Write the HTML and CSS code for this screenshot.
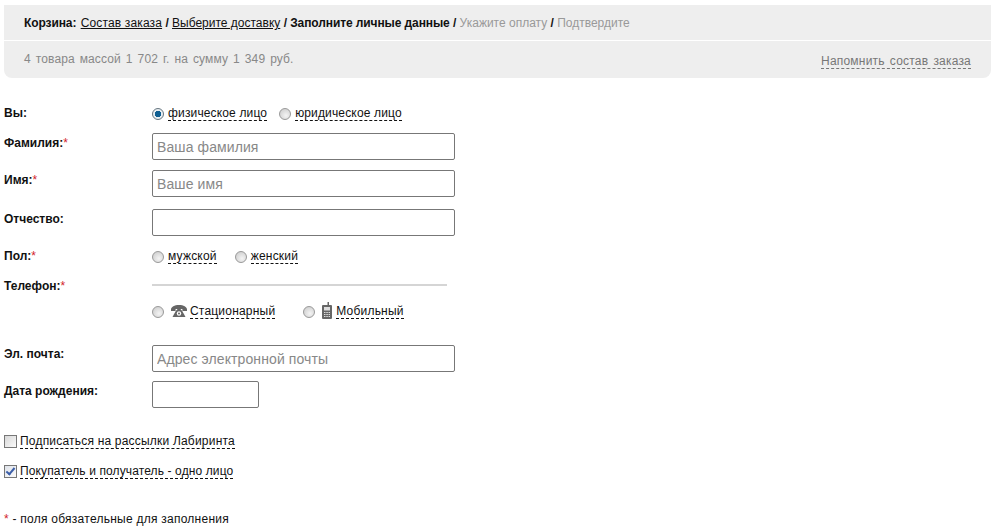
FILE: index.html
```html
<!DOCTYPE html>
<html lang="ru">
<head>
    <meta charset="UTF-8">
    <meta name="viewport" content="width=device-width, initial-scale=1.0">
    <title>Корзина</title>
    <link rel="stylesheet" href="styles.css">
</head>
<body>
    <div class="cart-panel">
        <div class="steps">
            <b class="steps-title">Корзина:</b>
            <a class="step-first" href="#">Состав заказа</a> <b>/</b>
            <a href="#">Выберите доставку</a> <b>/</b>
            <b>Заполните личные данные</b> <b>/</b>
            <span class="step-off">Укажите оплату</span> <b>/</b>
            <span class="step-off">Подтвердите</span>
        </div>
        <div class="summary">
            <span>4 товара массой 1 702 г. на сумму 1 349 руб.</span>
            <span class="remind">Напомнить состав заказа</span>
        </div>
    </div>

    <form class="order-form">
        <div class="row row-you">
            <div class="label">Вы:</div>
            <div class="choices">
                <label class="choice"><input type="radio" name="who" checked><span class="dash">физическое лицо</span></label>
                <label class="choice"><input type="radio" name="who"><span class="dash">юридическое лицо</span></label>
            </div>
        </div>
        <div class="row row-surname">
            <div class="label">Фамилия:<i>*</i></div>
            <input class="field" type="text" placeholder="Ваша фамилия">
        </div>
        <div class="row row-name">
            <div class="label">Имя:<i>*</i></div>
            <input class="field" type="text" placeholder="Ваше имя">
        </div>
        <div class="row row-middle">
            <div class="label">Отчество:</div>
            <input class="field" type="text">
        </div>
        <div class="row row-sex">
            <div class="label">Пол:<i>*</i></div>
            <div class="choices choices-wide">
                <label class="choice"><input type="radio" name="sex"><span class="dash">мужской</span></label>
                <label class="choice"><input type="radio" name="sex"><span class="dash">женский</span></label>
            </div>
        </div>
        <div class="row row-phone">
            <div class="label">Телефон:<i>*</i></div>
            <div class="phone-line"></div>
        </div>
        <div class="row row-phone-type">
            <div class="label"></div>
            <div class="choices choices-phone">
                <label class="choice">
                    <input type="radio" name="phone">
                    <svg class="ico-phone" viewBox="0 0 16 12" width="16" height="12">
                        <path d="M0 4.500C0 2 3.500 0 8 0s8 2 8 4.500V6h-4.600V4H9.800v1H6.200V4H4.600v2H0z" fill="#666"/>
                        <path d="M4.500 6.500L5.600 5h4.800l1.100 1.500L14.500 12h-13z" fill="#666"/>
                        <circle cx="8" cy="8.500" r="2.200" fill="#fff"/>
                        <circle cx="8" cy="8.500" r="1" fill="#666"/>
                    </svg>
                    <span class="dash">Стационарный</span>
                </label>
                <label class="choice">
                    <input type="radio" name="phone">
                    <svg class="ico-mobile" viewBox="0 0 10 17" width="10" height="17">
                        <path d="M5.500 0h1.500v3h2a1 1 0 0 1 1 1v12a1 1 0 0 1-1 1H1a1 1 0 0 1-1-1V4a1 1 0 0 1 1-1h4.500z" fill="#666"/>
                        <rect x="2" y="5" width="6" height="3.500" fill="#ddd"/>
                        <path d="M2 10h1.500v1H2zm2.300 0h1.500v1H4.300zm2.300 0H8v1H6.600zM2 12h1.500v1H2zm2.300 0h1.500v1H4.300zm2.300 0H8v1H6.600zM2 14h1.500v1H2zm2.300 0h1.500v1H4.300zm2.300 0H8v1H6.600z" fill="#ddd"/>
                    </svg>
                    <span class="dash">Мобильный</span>
                </label>
            </div>
        </div>
        <div class="row row-email">
            <div class="label">Эл. почта:</div>
            <input class="field" type="text" placeholder="Адрес электронной почты">
        </div>
        <div class="row row-birth">
            <div class="label">Дата рождения:</div>
            <input class="field field-date" type="text">
        </div>
        <label class="check check-news"><input type="checkbox"><span class="dash">Подписаться на рассылки Лабиринта</span></label>
        <label class="check check-same"><input type="checkbox" checked><span class="dash">Покупатель и получатель - одно лицо</span></label>
        <div class="note"><i>*</i> - поля обязательные для заполнения</div>
    </form>
</body>
</html>
```

FILE: styles.css
```css
body {
    margin: 0;
    height: 532px;
    overflow: hidden;
    background-color: #fff;
    color: #111;
    font-family: "Liberation Sans", Arial, sans-serif;
    font-size: 12px;
    line-height: 14px;
}
a {
    color: #111;
}
b {
    letter-spacing: -0.1px;
}
i {
    color: #d2232a;
    font-style: normal;
    font-weight: normal;
}
.cart-panel {
    margin: 5px 5px 0 4px;
    background-color: #eee;
    border-radius: 0 0 8px 8px;
}
.steps {
    box-sizing: border-box;
    padding: 11px 0 0 20px;
    border-bottom: 1px solid #fff;
    height: 36px;
}
.step-first {
    margin-left: 1px;
    letter-spacing: 0.15px;
}
.step-off {
    color: #999;
}
.summary {
    display: flex;
    justify-content: space-between;
    height: 37px;
    box-sizing: border-box;
    padding: 11px 20px 0;
    color: #888;
    letter-spacing: 0.1px;
    word-spacing: 1.6px;
}
.remind {
    height: 14px;
    margin-top: 2px;
    border-bottom: 1px dashed #777;
    color: #777;
    letter-spacing: 0.2px;
}
.order-form {
    padding-left: 4px;
}
.row {
    display: flex;
}
.label {
    width: 148px;
    flex-shrink: 0;
    font-weight: bold;
}
.choices {
    display: flex;
    gap: 12px;
}
.choices-wide {
    gap: 18px;
}
.choices-phone {
    gap: 28px;
}
.choice {
    display: flex;
    align-items: flex-start;
}
.dash {
    height: 14px;
    border-bottom: 1px dashed #111;
    letter-spacing: 0.2px;
}
.row-you .dash {
    letter-spacing: 0.15px;
}
.check-same .dash {
    letter-spacing: 0.12px;
}
input[type="radio"] {
    appearance: none;
    width: 12px;
    height: 12px;
    margin: 2px 4px 0 0;
    border: 1px solid #999;
    border-radius: 50%;
    background: radial-gradient(circle at 60% 65%, #f4f4f4, #c8c8c8);
}
input[type="radio"]:checked {
    border-color: #66757f;
    background: radial-gradient(circle, #0f5f92 0 3px, #e8eef2 3.500px);
}
.field {
    width: 303px;
    height: 27px;
    box-sizing: border-box;
    margin: 0;
    padding: 1px 4px 0;
    border: 1px solid #777;
    border-radius: 2px;
    font-family: "Liberation Sans", Arial, sans-serif;
    font-size: 14px;
    letter-spacing: 0.1px;
}
.field::placeholder {
    color: #888;
    opacity: 1;
}
.field-date {
    width: 107px;
}
.row-you {
    margin-top: 28px;
    height: 27px;
}
.row-surname {
    height: 27px;
}
.row-surname .label,
.row-name .label,
.row-middle .label,
.row-birth .label {
    padding-top: 3px;
}
.row-email .label {
    padding-top: 2px;
}
.row-name {
    margin-top: 10px;
    height: 27px;
}
.row-middle {
    margin-top: 12px;
    height: 27px;
}
.row-sex {
    margin-top: 13px;
    height: 20px;
}
.row-phone {
    margin-top: 9px;
    height: 26px;
}
.row-phone .label {
    padding-top: 1px;
}
.phone-line {
    width: 295px;
    height: 2px;
    margin-top: 6px;
    background-color: #d5d5d5;
}
.row-phone-type {
    height: 41px;
}
.ico-phone {
    margin: 1px 3px 0 3px;
}
.ico-mobile {
    margin: -2px 4px 0 3px;
}
.row-email {
    height: 27px;
}
.row-birth {
    margin-top: 9px;
    height: 27px;
}
.check {
    display: flex;
    align-items: flex-start;
}
input[type="checkbox"] {
    appearance: none;
    width: 13px;
    height: 13px;
    margin: 1px 3px 0 0;
    border: 1px solid #777;
    background: linear-gradient(135deg, #d8d8d8, #fafafa);
}
input[type="checkbox"]:checked {
    background: linear-gradient(135deg, #dfe3ea, #fafafa);
}
input[type="checkbox"]:checked::after {
    content: "";
    display: block;
    width: 3px;
    height: 7px;
    margin: 0 0 0 3px;
    border-right: 2px solid #3b5ea8;
    border-bottom: 2px solid #3b5ea8;
    transform: rotate(40deg);
}
.check-news {
    margin-top: 26px;
    height: 30px;
}
.note {
    margin-top: 33px;
    letter-spacing: 0.25px;
}
```
